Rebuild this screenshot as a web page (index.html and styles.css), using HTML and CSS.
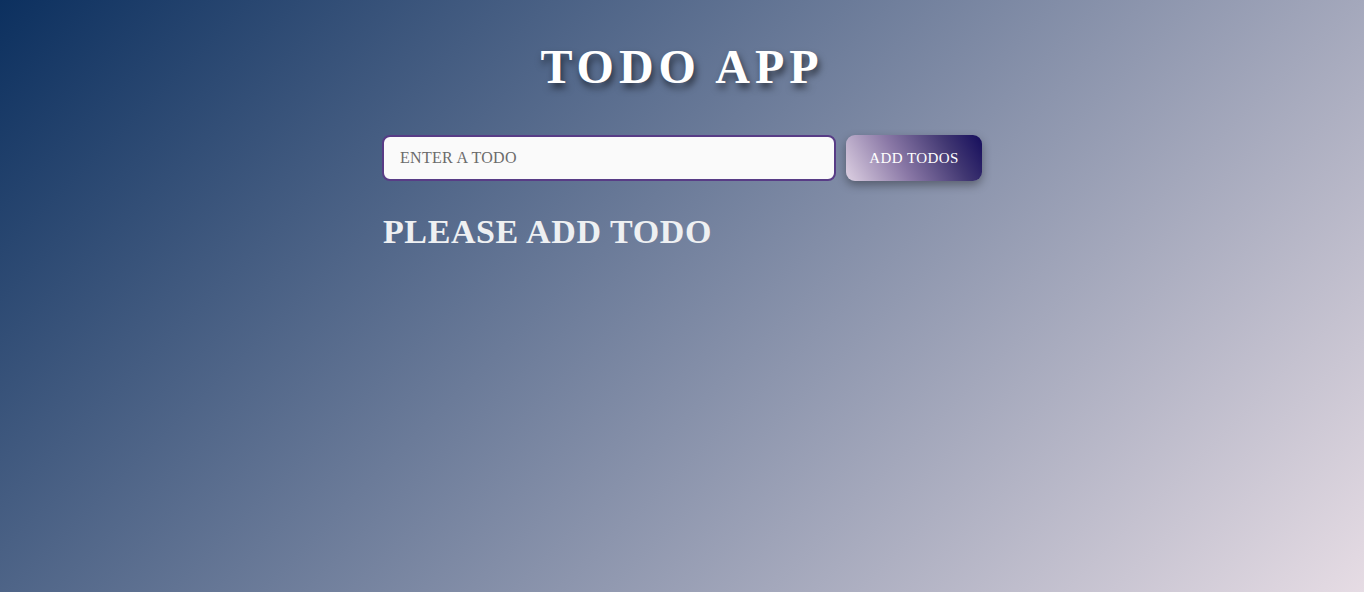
FILE: index.html
```html
<!DOCTYPE html>
<html lang="en">
<head>
<meta charset="utf-8">
<title>Todo App</title>
<link rel="stylesheet" href="styles.css">
</head>
<body>
<main class="app">
  <h1 class="title">TODO APP</h1>
  <form class="todo-form">
    <input class="todo-input" type="text" placeholder="ENTER A TODO">
    <button class="add-btn" type="button">ADD TODOS</button>
  </form>
  <h2 class="empty">PLEASE ADD TODO</h2>
</main>
</body>
</html>
```

FILE: styles.css
```css
* { box-sizing: border-box; }
html, body { height: 100%; }
body {
  margin: 0;
  min-height: 592px;
  font-family: "Liberation Serif", "Times New Roman", serif;
  background: linear-gradient(135deg, #0c305f 0%, #e6dce4 100%);
  overflow: hidden;
}
.app {
  width: 600px;
  margin: 0 auto;
  padding-top: 39px;
  display: flex;
  flex-direction: column;
}
.title {
  margin: 0;
  text-align: center;
  font-size: 48px;
  line-height: 56px;
  font-weight: 700;
  letter-spacing: 5px;
  color: #ffffff;
  text-shadow: 2px 5px 7px rgba(0, 0, 0, 0.55);
}
.todo-form {
  display: flex;
  gap: 10px;
  margin-top: 40px;
}
.todo-input {
  flex: 1;
  height: 46px;
  padding: 0 16px;
  border: 2px solid #583c86;
  border-radius: 8px;
  background: #fafafa;
  font-family: "Liberation Serif", "Times New Roman", serif;
  font-size: 16px;
  color: #333;
  outline: none;
}
.todo-input::placeholder { color: #6b6b6b; letter-spacing: 0.3px; }
.add-btn {
  width: 136px;
  height: 46px;
  border: none;
  border-radius: 9px;
  background: linear-gradient(60deg, #ddd0e2 0%, #8a78a6 40%, #413772 75%, #150d5c 100%);
  color: #ffffff;
  font-family: "Liberation Serif", "Times New Roman", serif;
  font-size: 15px;
  letter-spacing: 0.4px;
  box-shadow: 0 4px 10px rgba(0, 0, 0, 0.35);
  cursor: pointer;
}
.empty {
  margin: 31px 0 0;
  padding-left: 1px;
  font-size: 34px;
  line-height: 40px;
  font-weight: 700;
  letter-spacing: 0.6px;
  color: #eef0f2;
}
```
